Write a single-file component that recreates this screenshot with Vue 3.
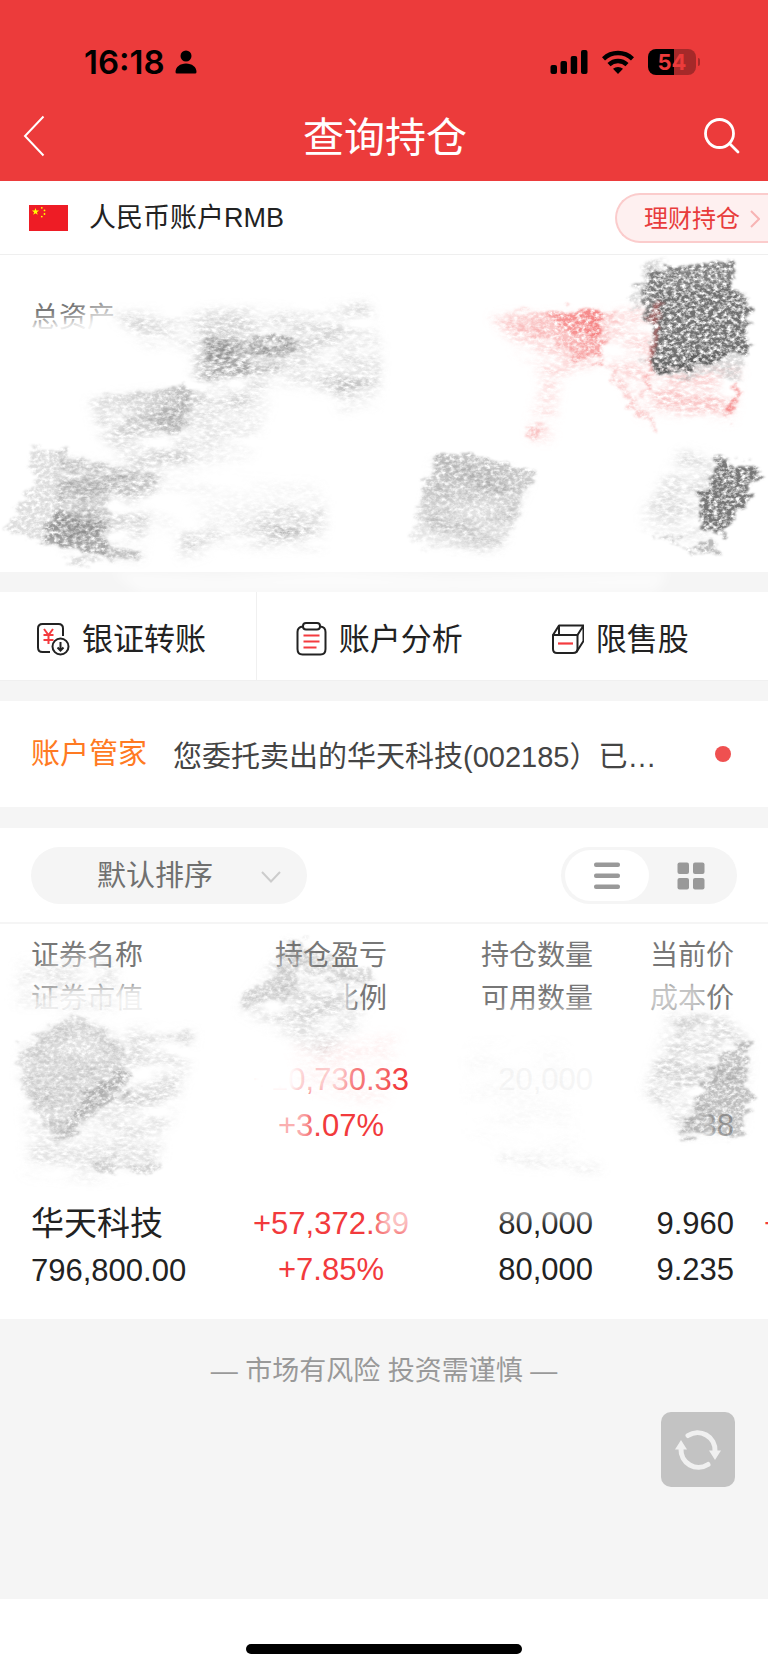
<template>
  <div class="page">
    <header class="header">
      <div class="status-bar">
        <div class="status-left">
          <span class="time">16:18</span>
          <svg width="22" height="24" viewBox="0 0 22 24">
            <circle cx="11" cy="6" r="5.5" />
            <path d="M.5 22c0-5 4.500-8.500 10.500-8.500s10.500 3.500 10.500 8.500q0 1.500-1.500 1.500h-18q-1.500 0-1.500-1.500z" />
          </svg>
        </div>
        <div class="status-right">
          <svg width="38" height="24" viewBox="0 0 38 24">
            <rect x="0.500" y="15" width="6.500" height="9" rx="2" />
            <rect x="10.500" y="11" width="6.500" height="13" rx="2" />
            <rect x="20.700" y="6" width="6.500" height="18" rx="2" />
            <rect x="31" y="0" width="6.500" height="24" rx="2" />
          </svg>
          <svg width="32" height="24" viewBox="0 0 32 24">
            <g fill="none" stroke="#000" stroke-width="4.400">
              <path d="M1.500 8.800a21 21 0 0 1 29 0" />
              <path d="M7 14.600a13 13 0 0 1 18 0" />
            </g>
            <path d="M11 18.800a7.500 7.500 0 0 1 10 0l-5 5.200z" />
          </svg>
          <div class="battery"><span class="battery-body">54</span><i class="battery-nub"></i></div>
        </div>
      </div>
      <nav class="nav">
        <button class="icon-btn back" aria-label="返回">
          <svg width="22" height="42" viewBox="0 0 22 42" fill="none" stroke="#fff" stroke-width="2">
            <path d="M20.500 1.500 2 21l18.500 19.500" />
          </svg>
        </button>
        <h1>查询持仓</h1>
        <button class="icon-btn" aria-label="搜索">
          <svg width="38" height="38" viewBox="0 0 38 38" fill="none" stroke="#fff" stroke-width="2.800" stroke-linecap="round">
            <circle cx="16.500" cy="16.500" r="14" />
            <path d="M26.500 26.500 35 35" />
          </svg>
        </button>
      </nav>
    </header>

    <section class="account">
      <svg width="39" height="26" viewBox="0 0 39 26">
        <rect width="39" height="26" fill="#ee1c25" />
        <path fill="#ff0" d="m6.500 3 .9 2.600h2.700L7.900 7.200l.8 2.600-2.200-1.600-2.200 1.600.8-2.600-2.200-1.600h2.700z" />
        <g fill="#ff0">
          <circle cx="12.800" cy="2.800" r=".9" />
          <circle cx="15.500" cy="5.400" r=".9" />
          <circle cx="15.500" cy="9" r=".9" />
          <circle cx="12.800" cy="11.600" r=".9" />
        </g>
      </svg>
      <span class="account-name">人民币账户RMB</span>
      <a class="account-link" href="#">
        理财持仓
        <svg width="10" height="18" viewBox="0 0 10 18" fill="none" stroke="#f7b4b4" stroke-width="2">
          <path d="m1 1 8 8-8 8" />
        </svg>
      </a>
    </section>

    <section class="assets">
      <div class="assets-label">总资产</div>
      <svg class="scribble" viewBox="0 0 768 337">
        <defs>
          <filter id="chalk" filterUnits="userSpaceOnUse" x="0" y="0" width="768" height="400" color-interpolation-filters="sRGB">
            <feTurbulence type="fractalNoise" baseFrequency=".05 .14" numOctaves="3" seed="4" result="wave" />
            <feDisplacementMap in="SourceGraphic" in2="wave" scale="24" xChannelSelector="R" yChannelSelector="G" result="rough" />
            <feGaussianBlur in="rough" stdDeviation="1" result="edge" />
            <feTurbulence type="fractalNoise" baseFrequency=".22 .3" numOctaves="3" seed="9" />
            <feColorMatrix values="0 0 0 0 0  0 0 0 0 0  0 0 0 0 0  2.600 0 0 0 -.6" result="grain" />
            <feComposite in="edge" in2="grain" operator="in" />
          </filter>
          <filter id="dust" filterUnits="userSpaceOnUse" x="0" y="0" width="768" height="400" color-interpolation-filters="sRGB">
            <feGaussianBlur in="SourceGraphic" stdDeviation="6" result="soft" />
            <feTurbulence type="fractalNoise" baseFrequency=".02 .05" numOctaves="2" seed="6" />
            <feColorMatrix values="0 0 0 0 0  0 0 0 0 0  0 0 0 0 0  2.600 0 0 0 -.7" result="patch" />
            <feComposite in="soft" in2="patch" operator="in" result="patchy" />
            <feTurbulence type="fractalNoise" baseFrequency=".16 .3" numOctaves="4" seed="21" />
            <feColorMatrix values="0 0 0 0 0  0 0 0 0 0  0 0 0 0 0  2.400 0 0 0 -.6" result="grain" />
            <feComposite in="patchy" in2="grain" operator="in" />
          </filter>
          <filter id="haze" x="-20%" y="-20%" width="140%" height="140%">
            <feGaussianBlur stdDeviation="6" />
          </filter>
          <linearGradient id="redFade">
            <stop offset="0" stop-color="#f04848" stop-opacity="0" />
            <stop offset="1" stop-color="#f04848" stop-opacity=".8" />
          </linearGradient>
          <linearGradient id="grayFade">
            <stop offset="0" stop-color="#555" stop-opacity=".15" />
            <stop offset="1" stop-color="#555" stop-opacity=".8" />
          </linearGradient>
          <linearGradient id="grayDrop" x2="0" y2="1">
            <stop offset="0" stop-color="#555" stop-opacity=".7" />
            <stop offset="1" stop-color="#555" stop-opacity=".1" />
          </linearGradient>
        </defs>
        <g fill="#fff" filter="url(#haze)">
          <path d="M20 68 120 60 120 90 20 90z" opacity=".9" />
          <path d="M85 50 130 45 130 80 85 80z" opacity=".5" />
          <path d="M110 316 220 322 330 314 450 322 670 316 655 337H140z" opacity=".6" />
        </g>
        <g filter="url(#dust)">
          <path v-for="(s, i) in assetDust" :key="i" :d="s.d" :fill="s.fill" :opacity="s.opacity" />
        </g>
        <g filter="url(#chalk)">
          <path v-for="(s, i) in assetChalk" :key="i" :d="s.d" :fill="s.fill" :opacity="s.opacity" />
        </g>
      </svg>
    </section>

    <nav class="tools">
      <a class="tool" href="#">
        <svg width="34" height="34" viewBox="0 0 34 34" fill="none" stroke="#222" stroke-width="2">
          <path d="M14 30H6.500Q2 30 2 25.500V6.500Q2 2 6.500 2h16Q27 2 27 6.500V14" />
          <circle cx="24.500" cy="24.500" r="8" />
          <path d="M24.500 20v8m-3-2.500 3 3 3-3" />
          <path stroke="#f43b3f" d="m8 7 4.500 6L17 7M7.500 13h10M7.500 18h10M12.500 13v9" />
        </svg>
        <span>银证转账</span>
      </a>
      <a class="tool" href="#">
        <svg width="34" height="34" viewBox="0 0 34 34" fill="none" stroke="#222" stroke-width="2">
          <path d="M10 4.500Q4.500 5 4.500 10v17q0 5.500 5 5.500h18q5 0 5-5.500V10q0-5-5-5.500" />
          <rect x="10" y="1" width="17" height="6.500" rx="3" />
          <path stroke="#f43b3f" stroke-width="2.200" d="M10.500 13.500h16M10.500 19.500h16M10.500 25.500h13" />
        </svg>
        <span>账户分析</span>
      </a>
      <a class="tool" href="#">
        <svg width="34" height="34" viewBox="0 0 34 34" fill="none" stroke="#222" stroke-width="2" stroke-linejoin="round">
          <path d="M3 13h24.500v13.500q0 4.500-4.500 4.500H7q-4 0-4-4z" />
          <path d="M3 13 9 3.500h24.500L27.500 13M33.500 3.500V19l-7 11M9 3.500V13" />
          <path stroke="#f43b3f" stroke-width="2.200" d="M8 21.500h15" />
        </svg>
        <span>限售股</span>
      </a>
    </nav>

    <section class="notice">
      <span class="notice-label">账户管家</span>
      <span class="notice-text">您委托卖出的华天科技(002185）已…</span>
      <i class="notice-dot"></i>
    </section>

    <section class="positions">
      <div class="filter">
        <div class="sort">
          <select v-model="sort" aria-label="排序方式">
            <option value="default">默认排序</option>
          </select>
          <svg class="sort-arrow" width="20" height="12" viewBox="0 0 20 12" fill="none" stroke="#ccc" stroke-width="2">
            <path d="m1 1 9 9.500L19 1" />
          </svg>
        </div>
        <div class="view-switch">
          <button :class="{ active: view === 'list' }" aria-label="列表" @click="view = 'list'">
            <svg width="28" height="28" viewBox="0 0 28 28" fill="#999">
              <rect x="1" y="0.500" width="26" height="4.500" rx="2" />
              <rect x="1" y="11.500" width="26" height="4.500" rx="2" />
              <rect x="1" y="22.500" width="26" height="4.500" rx="2" />
            </svg>
          </button>
          <button :class="{ active: view === 'grid' }" aria-label="宫格" @click="view = 'grid'">
            <svg width="28" height="28" viewBox="0 0 28 28" fill="#999">
              <rect x="0.500" y="0.500" width="11.500" height="11.500" rx="2" />
              <rect x="16" y="0.500" width="11.500" height="11.500" rx="2" />
              <rect x="0.500" y="16" width="11.500" height="11.500" rx="2" />
              <rect x="16" y="16" width="11.500" height="11.500" rx="2" />
            </svg>
          </button>
        </div>
      </div>

      <div class="table-wrap">
        <table>
          <colgroup>
            <col class="col-name" />
            <col class="col-profit" />
            <col class="col-amount" />
            <col class="col-price" />
            <col />
          </colgroup>
          <thead>
            <tr>
              <th>证券名称<br />证券市值</th>
              <th>持仓盈亏<br />盈亏比例</th>
              <th>持仓数量<br />可用数量</th>
              <th>当前价<br />成本价</th>
              <th></th>
            </tr>
          </thead>
          <tbody>
            <tr v-for="row in rows" :key="row.profit">
              <td><span class="stock">{{ row.name }}</span><br />{{ row.value }}</td>
              <td>{{ row.profit }}<br />{{ row.rate }}</td>
              <td :class="{ erased: row.erased }">{{ row.amount }}<br />{{ row.usable }}</td>
              <td>{{ row.price }}<br />{{ row.cost }}</td>
              <td>{{ row.today }}</td>
            </tr>
          </tbody>
        </table>
        <svg class="scribble" viewBox="0 0 768 394">
          <g fill="#fff" filter="url(#haze)">
            <path d="M60 62H155V95H20V82z" opacity=".8" />
            <path d="M20 62H155V95H20z" opacity=".5" />
            <path d="M60 32 110 30 100 52 30 52z" opacity=".5" />
            <path d="M262 50 348 52 350 100 262 100z" />
            <path d="M262 50 348 52 350 100 262 100z" />
            <path d="M262 30H310V60H262z" opacity=".4" />
            <path d="M245 125H300L295 175H245z" />
            <path d="M245 125H350L345 172H245z" opacity=".75" />
            <path d="M330 125H395L385 172H330z" opacity=".3" />
            <path d="M270 180H310V220H270z" opacity=".6" />
            <path d="M500 82H600V100H500z" opacity=".5" />
            <path d="M640 58H705V90H640z" opacity=".6" />
            <path d="M660 180H710V225H660z" />
            <path d="M700 180H745V225H700z" opacity=".6" />
            <path d="M385 280H415V310H375z" opacity=".7" />
            <path d="M490 275H600V294H490z" opacity=".6" />
          </g>
          <g filter="url(#dust)">
            <path v-for="(s, i) in tableDust" :key="i" :d="s.d" :fill="s.fill" :opacity="s.opacity" />
          </g>
          <g filter="url(#chalk)">
            <path v-for="(s, i) in tableChalk" :key="i" :d="s.d" :fill="s.fill" :opacity="s.opacity" />
          </g>
        </svg>
      </div>
    </section>

    <footer class="footer">
      <p>— 市场有风险 投资需谨慎 —</p>
      <button class="refresh" aria-label="刷新">
        <svg width="46" height="42" viewBox="0 0 46 42" fill="none" stroke="#f0f0f0" stroke-width="5" stroke-linecap="round">
          <path d="M13 6.500A17.500 17.500 0 0 1 40 22" />
          <path d="M33 35.500A17.500 17.500 0 0 1 6 20" />
          <path d="m34 21.500h12L40 31zM0 20.500h12L6 11z" fill="#f0f0f0" stroke="none" />
        </svg>
      </button>
    </footer>
    <div class="home-indicator"><i></i></div>
  </div>
</template>

<script setup>
import { ref } from 'vue'

const sort = ref('default')
const view = ref('list')

const rows = [
  { name: '', value: '', profit: '+10,730.33', rate: '+3.07%', amount: '20,000', usable: '', price: '', cost: '38', today: '', erased: true },
  { name: '华天科技', value: '796,800.00', profit: '+57,372.89', rate: '+7.85%', amount: '80,000', usable: '80,000', price: '9.960', cost: '9.235', today: '+' }
]

// 涂抹笔迹
const stroke = (d, opacity, fill = '#555') => ({ d, opacity, fill })

const assetDust = [
  stroke('M110 60 245 55 292 57 368 48 380 95 378 130 350 140 270 125 190 130 200 95 150 90z', 0.24),
  stroke('M200 84 300 84 280 115 250 145 185 165z', 0.35),
  stroke('M90 145 190 135 190 205 150 220 100 180z', 0.28),
  stroke('M335 125 378 130 375 150 340 155z', 0.25),
  stroke('M190 150 270 145 250 200 180 215z', 0.15),
  stroke('M60 205 160 218 150 250 140 303 60 290z', 0.35),
  stroke('M150 220 320 230 325 260 160 280z', 0.06),
  stroke('M180 280 325 245 322 290 220 292 182 304z', 0.25),
  stroke('M270 275 320 265 320 290 275 292z', 0.25),
  stroke('M435 205 530 220 500 295 420 285z', 0.25),
  stroke('M680 195 725 205 705 290 640 265z', 0.2),
  stroke('M490 62 600 60 595 110 560 120 550 185 530 183 540 120z', 0.22, '#f04848'),
  stroke('M605 60 655 50 650 110 645 165 610 105z', 0.22, '#f04848'),
  stroke('M652 115 740 115 732 165 650 155z', 0.3, '#f04848')
]

const assetChalk = [
  stroke('M32 192 65 196 62 288 5 280 18 250 35 225z', 0.2),
  stroke('M203 84 299 84 290 92 270 98 203 106z', 0.3),
  stroke('M240 84 299 84 288 104 262 112z', 0.4, 'url(#grayFade)'),
  stroke('M88 145 192 129 190 150 180 180 140 168 110 155z', 0.45, 'url(#grayFade)'),
  stroke('M60 200 150 218 158 226 62 214z', 0.25),
  stroke('M62 225 110 222 108 300 42 288 55 255z', 0.22),
  stroke('M52 255 104 272 106 300 42 288z', 0.35),
  stroke('M104 290 140 300 140 306 106 302z', 0.3),
  stroke('M65 305 100 303 98 310 66 313z', 0.2),
  stroke('M438 196 538 214 525 240 510 280 480 300 412 288 425 225z', 0.55, 'url(#grayDrop)'),
  stroke('M650 2 660 2 662 35 630 56 638 30z', 0.2),
  stroke('M636 100 745 100 740 122 650 118z', 0.22),
  stroke('M655 16 732 4 733 30 749 48 748 96 652 121 649 85 645 55 640 28z', 0.75),
  stroke('M655 35 733 30 748 60 748 96 652 121z', 0.35),
  stroke('M652 115 748 92 748 97 652 122z', 0.7),
  stroke('M715 202 762 215 755 228 750 245 735 260 728 282 702 272 698 250z', 0.8),
  stroke('M640 270 697 294 705 283 725 300 715 302 700 299z', 0.4),
  stroke('M480 60 600 54 602 105 575 105 545 85z', 0.6, 'url(#redFade)'),
  stroke('M545 60 600 54 601 80 570 78z', 0.35, '#f04848'),
  stroke('M600 54 620 53 612 70 601 100z', 0.22, '#f04848'),
  stroke('M600 104 610 108 657 178 652 178z', 0.25, '#f04848'),
  stroke('M655 48 663 45 645 145 641 140z', 0.35, '#f04848'),
  stroke('M735 130 740 130 732 165 726 165z', 0.5, '#f04848'),
  stroke('M525 176 545 172 530 187z', 0.25, '#f04848')
]

const tableDust = [
  stroke('M20 38 115 35 118 85 15 82z', 0.14),
  stroke('M75 88 20 128 22 162 45 210 60 215 130 155 118 115z', 0.22),
  stroke('M130 105 195 108 185 150 170 200 115 180z', 0.2),
  stroke('M25 180 165 175 160 240 100 256 25 250z', 0.16),
  stroke('M288 20 370 60 360 100 320 130 240 85z', 0.25),
  stroke('M290 120 400 110 385 180 310 175z', 0.07, '#f04848'),
  stroke('M465 120 565 120 580 235 470 210z', 0.03),
  stroke('M502 230 602 240 600 246 500 238z', 0.2),
  stroke('M670 90 720 90 750 120 742 205 680 210 645 165 660 120z', 0.25)
]

const tableChalk = [
  stroke('M75 88 20 125 22 160 50 215 130 155 118 115z', 0.18),
  stroke('M52 218 60 220 133 157 120 142 92 165z', 0.28),
  stroke('M165 108 195 108 190 118 168 117z', 0.12),
  stroke('M90 237 165 240 140 250 95 245z', 0.25),
  stroke('M288 10 375 55 360 62 300 45 290 75 237 82 255 60 277 50z', 0.2),
  stroke('M675 95 715 88 705 100 680 115z', 0.15),
  stroke('M735 118 750 118 748 150 752 170 742 210 680 212 690 190 720 130z', 0.35)
]
</script>

<style>
body {
  margin: 0;
  background: #fff;
}
</style>

<style scoped>
.page {
  font-family: "Liberation Sans", "Noto Sans CJK SC", sans-serif;
  color: #222;
  background: #f5f5f5;
  overflow: hidden;
}

.page svg {
  flex-shrink: 0;
}

button {
  border: 0;
  padding: 0;
  background: none;
}

a {
  color: inherit;
  text-decoration: none;
}

.header {
  background: #ec3b3b;
}

.status-bar {
  display: flex;
  justify-content: space-between;
  align-items: center;
  height: 56px;
  padding: 34px 68px 0 84px;
}

.status-left,
.status-right {
  display: flex;
  align-items: center;
  gap: 14px;
}

.status-left {
  gap: 10px;
}

.time {
  font: 600 33px Inter, sans-serif;
  color: #000;
}

.battery {
  display: flex;
  align-items: center;
  gap: 2px;
}

.battery-body {
  width: 48px;
  border-radius: 8px;
  background: linear-gradient(90deg, #000 54%, #a52929 54%);
  color: #ec3b3b;
  font: 700 22px/26px Inter, sans-serif;
  text-align: center;
}

.battery-nub {
  width: 2px;
  height: 8px;
  border-radius: 0 2px 2px 0;
  background: #a52929;
}

.nav {
  display: flex;
  justify-content: space-between;
  align-items: center;
  height: 91px;
  padding: 0 27px 0 23px;
}

.icon-btn {
  display: flex;
  width: 38px;
}

.back {
  width: 44px;
}

.nav h1 {
  margin: 0;
  padding-bottom: 4px;
  color: #fff;
  font-size: 41px;
  font-weight: 400;
}

.account {
  display: flex;
  align-items: center;
  height: 73px;
  padding-left: 29px;
  background: #fff;
  border-bottom: 1px solid #efefef;
}

.account-name {
  margin-left: 21px;
  padding-bottom: 5px;
  font-size: 27px;
}

.account-link {
  display: flex;
  align-items: center;
  gap: 10px;
  margin-left: auto;
  padding: 2px 8px 0 27px;
  border: 2px solid #fbcccc;
  border-right: 0;
  border-radius: 25px 0 0 25px;
  background: #fef0f0;
  color: #e83c3c;
  font-size: 24px;
  line-height: 44px;
}

.assets {
  position: relative;
  height: 317px;
  margin-bottom: 20px;
  background: #fff;
}

.assets-label {
  padding: 41px 31px;
  color: #777;
  font-size: 28px;
  line-height: 43px;
}

.scribble {
  position: absolute;
  top: 0;
  left: 0;
  width: 100%;
  pointer-events: none;
}

.tools {
  display: grid;
  grid-template-columns: 101fr 101fr 100fr;
  background: #fff;
}

.tool {
  display: flex;
  align-items: center;
  gap: 12px;
  height: 82px;
  padding: 6px 0 0 36px;
  border-bottom: 1px solid #f0f0f0;
  font-size: 31px;
}

.tool span {
  padding-bottom: 5px;
}

.tool:first-child {
  border-right: 1px solid #f0f0f0;
}

.notice {
  display: flex;
  align-items: center;
  height: 106px;
  margin: 20px 0 21px;
  padding: 0 37px 0 31px;
  background: #fff;
  font-size: 29px;
}

.notice-label {
  padding-bottom: 6px;
  color: #ff7a22;
}

.notice-text {
  margin-left: 26px;
  color: #444;
}

.notice-dot {
  width: 16px;
  height: 16px;
  margin-left: auto;
  border-radius: 50%;
  background: #ef5050;
}

.positions {
  background: #fff;
}

.filter {
  display: flex;
  justify-content: space-between;
  padding: 19px 31px 18px;
  border-bottom: 2px solid #f5f5f5;
}

.sort {
  position: relative;
}

.sort select {
  width: 276px;
  height: 57px;
  padding: 0 66px;
  border: 0;
  border-radius: 29px;
  appearance: none;
  background: #f5f5f5;
  color: #707070;
  font: inherit;
  font-size: 29px;
}

.sort-arrow {
  position: absolute;
  top: 24px;
  right: 26px;
  pointer-events: none;
}

.view-switch {
  display: flex;
  box-sizing: border-box;
  width: 176px;
  height: 57px;
  padding: 3px 4px;
  border-radius: 29px;
  background: #f5f5f5;
}

.view-switch button {
  display: flex;
  flex: 1;
  align-items: center;
  justify-content: center;
  border-radius: 26px;
}

.view-switch .active {
  background: #fff;
}

.table-wrap {
  position: relative;
}

table {
  width: 100%;
  table-layout: fixed;
  border-collapse: collapse;
  white-space: nowrap;
}

.col-name {
  width: 230px;
}

.col-profit {
  width: 202px;
}

.col-amount {
  width: 161px;
}

.col-price {
  width: 141px;
}

th {
  padding: 10px 0;
  color: #777;
  font-size: 28px;
  font-weight: 400;
  line-height: 43px;
  text-align: right;
}

td {
  height: 92px;
  padding: 27px 0 25px;
  font-size: 31px;
  line-height: 46px;
  text-align: right;
  vertical-align: top;
}

th:first-child,
td:first-child {
  padding-left: 31px;
  text-align: left;
}

th:nth-child(2),
td:nth-child(2) {
  text-align: center;
}

td:nth-child(2),
td:last-child {
  color: #f23a3c;
}

td:last-child {
  padding-left: 30px;
  text-align: left;
}

.erased {
  color: #f6f6f6;
}

.stock {
  font-size: 33px;
}

.footer {
  padding: 32px 33px 112px;
}

.footer p {
  margin: 0 0 21px;
  color: #999;
  font-size: 27px;
  line-height: 40px;
  text-align: center;
}

.refresh {
  display: flex;
  align-items: center;
  justify-content: center;
  width: 74px;
  height: 75px;
  margin-left: auto;
  border-radius: 10px;
  background: #c3c3c3;
}

.home-indicator {
  padding: 45px 0 15px;
  background: #fff;
}

.home-indicator i {
  display: block;
  width: 36%;
  height: 10px;
  margin: 0 auto;
  border-radius: 5px;
  background: #000;
}
</style>
